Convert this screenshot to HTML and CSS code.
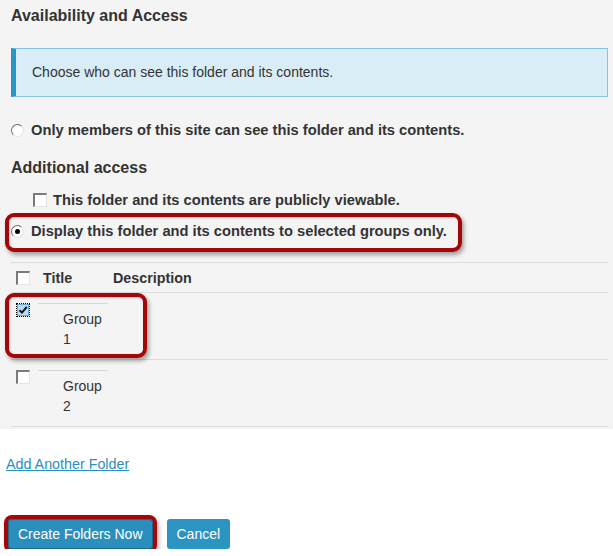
FILE: index.html
```html
<!DOCTYPE html>
<html lang="en">
<head>
<meta charset="utf-8">
<title>Availability and Access</title>
<link rel="stylesheet" href="styles.css">
</head>
<body>
<div class="panel">
  <h2 class="title">Availability and Access</h2>
  <div class="info">Choose who can see this folder and its contents.</div>
  <label class="opt first"><span class="radio"></span><span class="lbl">Only members of this site can see this folder and its contents.</span></label>
  <h3 class="sub">Additional access</h3>
  <label class="opt pub"><span class="cb"></span><span class="lbl">This folder and its contents are publicly viewable.</span></label>
  <label class="opt groups-opt mark"><span class="radio on"></span><span class="lbl">Display this folder and its contents to selected groups only.</span></label>

  <table class="groups">
    <colgroup><col class="c-check"><col class="c-title"><col></colgroup>
    <thead>
      <tr>
        <th class="check"><span class="cb"></span></th>
        <th class="ttl">Title</th>
        <th class="desc">Description</th>
      </tr>
    </thead>
    <tbody>
      <tr>
        <td class="check mark-cell"><span class="cb checked"><svg width="14" height="14" viewBox="0 0 14 14"><rect x="1.5" y="1.5" width="11" height="11" fill="#b9dcf3" stroke="#6aa9d6" stroke-width="1"/><path d="M3.5 7.2 L6 9.6 L10.8 3.8" fill="none" stroke="#111" stroke-width="2"/></svg></span></td>
        <td class="ttl"><div class="inner">Group 1</div></td>
        <td></td>
      </tr>
      <tr>
        <td class="check"><span class="cb"></span></td>
        <td class="ttl"><div class="inner">Group 2</div></td>
        <td></td>
      </tr>
    </tbody>
  </table>
</div>
<div class="footer">
  <a class="add" href="#">Add Another Folder</a>
  <div class="actions">
    <button class="btn primary">Create Folders Now</button>
    <button class="btn">Cancel</button>
  </div>
</div>
</body>
</html>
```
FILE: styles.css
```css
html, body {
  margin: 0;
  padding: 0;
  background: #ffffff;
}
body {
  font-family: "Liberation Sans", Arial, sans-serif;
  font-size: 14px;
  line-height: 20px;
  color: #333333;
}
.panel {
  background: #f4f4f4;
  padding: 6px 5px 2px 11px;
}
.title {
  margin: 0;
  font-size: 16px;
  line-height: 20px;
  font-weight: bold;
}
.info {
  margin-top: 22px;
  background: #d9edf7;
  border: 1px solid #82c4e6;
  border-left: 5px solid #2a96c5;
  padding: 14px 16px 14px 16px;
  line-height: 19px;
  font-size: 14px;
}
.opt {
  display: flex;
  align-items: center;
  width: fit-content;
  font-weight: bold;
  font-size: 14.7px;
  line-height: 20px;
}
.opt.first { margin-top: 23px; }
.sub {
  margin: 18px 0 0 0;
  font-size: 16px;
  line-height: 20px;
  font-weight: bold;
}
.opt.pub { margin: 12px 0 0 22px; }
.opt.groups-opt { margin-top: 11px; }

.radio {
  box-sizing: border-box;
  width: 13px;
  height: 13px;
  border-radius: 50%;
  border: 1px solid;
  border-color: #6b6b6b #e2e2e2 #e2e2e2 #6b6b6b;
  background: #ffffff;
  margin-right: 7px;
  position: relative;
  flex: none;
}
.radio.on::after {
  content: "";
  position: absolute;
  left: 3px;
  top: 3px;
  width: 5px;
  height: 5px;
  border-radius: 50%;
  background: #000;
}
.cb {
  box-sizing: border-box;
  display: inline-block;
  width: 14px;
  height: 14px;
  border-style: solid;
  border-width: 2px 1px 1px 2px;
  border-color: #7a7a7a #e4e4e4 #e4e4e4 #7a7a7a;
  background: #ffffff;
  flex: none;
  vertical-align: top;
}
.opt .cb { margin-right: 6px; }
.cb.checked {
  border: none;
  outline: 1px dotted #000;
  outline-offset: -1px;
  background: transparent;
}
.cb.checked svg { display: block; }

/* red annotation frames */
.mark { position: relative; }
.mark::after {
  content: "";
  position: absolute;
  left: -6px;
  top: -8px;
  right: -15px;
  bottom: -11px;
  border: 4px solid #a50606;
  border-radius: 9px;
  box-shadow: 2px 3px 4px rgba(0, 0, 0, 0.35), inset 1px 1px 2px rgba(0,0,0,0.2);
  pointer-events: none;
}

.groups {
  margin-top: 21px;
  width: 597px;
  border-collapse: collapse;
  table-layout: fixed;
}
.c-check { width: 27px; }
.c-title { width: 70px; }
.groups thead tr { border-top: 1px solid #dcdcdc; border-bottom: 1px solid #dcdcdc; }
.groups tbody tr { border-bottom: 1px solid #dcdcdc; }
.groups th {
  text-align: left;
  font-weight: bold;
  font-size: 14.3px;
  padding: 5px 0 4px 5px;
  vertical-align: middle;
}
.groups th .cb { vertical-align: -2px; }
.groups td {
  padding: 10px 0 10px 0;
  vertical-align: top;
}
.groups td.check { padding-left: 5px; }
.inner {
  border-top: 1px solid #d6d6d6;
  padding: 5px 0 0 25px;
}
.mark-cell { position: relative; }
.mark-cell::after {
  content: "";
  position: absolute;
  left: -6px;
  top: 0;
  width: 142px;
  height: 65px;
  box-sizing: border-box;
  border: 4px solid #a50606;
  border-radius: 9px;
  box-shadow: 2px 3px 4px rgba(0, 0, 0, 0.35), inset 1px 1px 2px rgba(0,0,0,0.2);
  pointer-events: none;
}

.footer {
  padding: 25px 6px 0 6px;
}
.add {
  display: block;
  width: fit-content;
  color: #2b8fc2;
  text-decoration: underline;
  font-size: 14.3px;
}
.actions {
  margin-top: 45px;
  margin-left: 2px;
  display: flex;
  gap: 14px;
}
.btn {
  font-family: "Liberation Sans", Arial, sans-serif;
  font-size: 14px;
  line-height: 20px;
  letter-spacing: 0;
  color: #ffffff;
  background: #2b94c3;
  border: none;
  border-radius: 3px;
  padding: 5px 10px;
  height: 30px;
}
.btn.primary {
  background: #2a8fbd;
  box-shadow: inset 0 0 0 1px #1b6a90, 0 0 0 4px #a50606, 2px 3px 4px 4px rgba(0, 0, 0, 0.3);
  border-radius: 4px;
}
```
